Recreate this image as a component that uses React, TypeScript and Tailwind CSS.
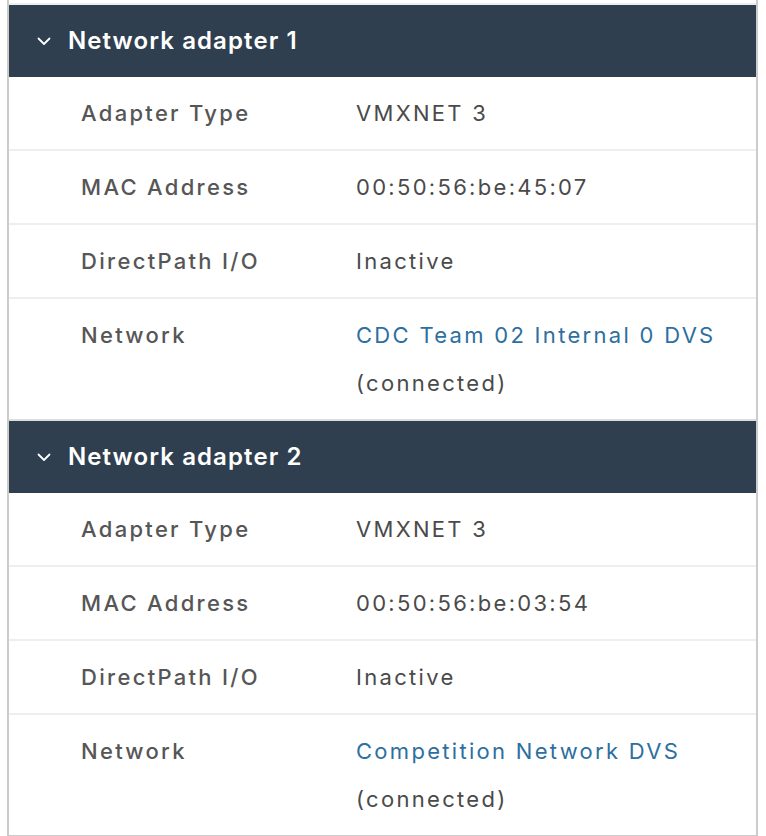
import React from "react";

type Row = { label: string; value: string; link?: boolean; note?: string };

const adapters: { title: string; rows: Row[] }[] = [
  {
    title: "Network adapter 1",
    rows: [
      { label: "Adapter Type", value: "VMXNET 3" },
      { label: "MAC Address", value: "00:50:56:be:45:07" },
      { label: "DirectPath I/O", value: "Inactive" },
      { label: "Network", value: "CDC Team 02 Internal 0 DVS", link: true, note: "(connected)" },
    ],
  },
  {
    title: "Network adapter 2",
    rows: [
      { label: "Adapter Type", value: "VMXNET 3" },
      { label: "MAC Address", value: "00:50:56:be:03:54" },
      { label: "DirectPath I/O", value: "Inactive" },
      { label: "Network", value: "Competition Network DVS", link: true, note: "(connected)" },
    ],
  },
];

const Chevron = () => (
  <svg width="14" height="9" viewBox="0 0 14 9" fill="none" className="shrink-0">
    <path d="M1.5 1.5 L7 7 L12.5 1.5" stroke="white" strokeWidth="1.8" strokeLinecap="round" strokeLinejoin="round" />
  </svg>
);

const Section: React.FC<{ title: string; rows: Row[]; last?: boolean }> = ({ title, rows, last }) => (
  <div>
    <div className="h-[72px] bg-[#2f3f4f] flex items-center pl-[28px] gap-[17px]">
      <Chevron />
      <span className="text-[24px] font-semibold text-white leading-none tracking-[1.1px]">{title}</span>
    </div>
    {rows.map((r, i) => (
      <div
        key={i}
        className={`grid grid-cols-[275px_1fr] pl-[72px] py-3 leading-[48px] text-[22px] tracking-[2.3px] ${
          i === rows.length - 1 ? (last ? "border-b-2 border-[#cccccc]" : "border-b-2 border-[#dddddd]") : "border-b-2 border-[#eeeeee]"
        }`}
      >
        <span className="font-medium text-[#565656]">{r.label}</span>
        <div className="flex flex-col text-[#4a4a4a]">
          <span className={r.link ? "text-[#2c6fa0]" : ""}>{r.value}</span>
          {r.note && <span>{r.note}</span>}
        </div>
      </div>
    ))}
  </div>
);

export default function App() {
  return (
    <div className="w-[766px] h-[836px] bg-white overflow-hidden" style={{ fontFamily: "Inter, 'Noto Sans', sans-serif" }}>
      <div className="ml-[7px] w-[751px] border-x-2 border-[#cccccc] pt-[3px]">
        <div className="border-t-2 border-[#eeeeee]">
          {adapters.map((a, i) => (
            <Section key={i} title={a.title} rows={a.rows} last={i === adapters.length - 1} />
          ))}
        </div>
      </div>
    </div>
  );
}
